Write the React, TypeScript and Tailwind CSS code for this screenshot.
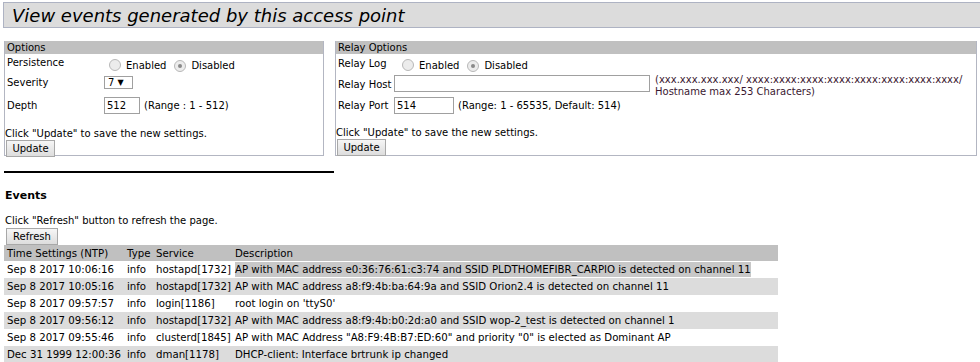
import React from 'react';

const rows = [
  { time: 'Sep 8 2017 10:06:16', type: 'info', service: 'hostapd[1732]', desc: 'AP with MAC address e0:36:76:61:c3:74 and SSID PLDTHOMEFIBR_CARPIO is detected on channel 11', selected: true },
  { time: 'Sep 8 2017 10:05:16', type: 'info', service: 'hostapd[1732]', desc: 'AP with MAC address a8:f9:4b:ba:64:9a and SSID Orion2.4 is detected on channel 11' },
  { time: 'Sep 8 2017 09:57:57', type: 'info', service: 'login[1186]', desc: "root login on 'ttyS0'" },
  { time: 'Sep 8 2017 09:56:12', type: 'info', service: 'hostapd[1732]', desc: 'AP with MAC address a8:f9:4b:b0:2d:a0 and SSID wop-2_test is detected on channel 1' },
  { time: 'Sep 8 2017 09:55:46', type: 'info', service: 'clusterd[1845]', desc: 'AP with MAC Address "A8:F9:4B:B7:ED:60" and priority "0" is elected as Dominant AP' },
  { time: 'Dec 31 1999 12:00:36', type: 'info', service: 'dman[1178]', desc: 'DHCP-client: Interface brtrunk ip changed' },
];

function Radio({ checked }: { checked?: boolean }) {
  return (
    <span className="inline-flex h-[12px] w-[12px] items-center justify-center rounded-full border border-[#b8b8b8] bg-[#ececec]">
      {checked && <span className="h-[4px] w-[4px] rounded-full bg-[#8a8a8a]" />}
    </span>
  );
}

function RadioPair() {
  return (
    <div className="flex items-center">
      <Radio />
      <span className="ml-[5px]">Enabled</span>
      <span className="ml-[8px]"><Radio checked /></span>
      <span className="ml-[5px]">Disabled</span>
    </div>
  );
}

function Btn({ label, w }: { label: string; w: string }) {
  return (
    <div className={`flex h-[17px] ${w} items-center justify-center border border-[#a8a8a8] bg-gradient-to-b from-[#f6f6f6] to-[#dddddd]`}>
      {label}
    </div>
  );
}

export default function App() {
  return (
    <div className="h-[362px] w-[980px] overflow-hidden bg-white text-[10px] leading-[13px] text-black" style={{ fontFamily: '"DejaVu Sans", Verdana, sans-serif' }}>
      <div className="ml-[3px] mt-[2px] flex h-[26px] items-center border border-r-0 border-[#aeb3c3] bg-[#dcdcdc] pl-[8px] text-[18px] italic">
        View events generated by this access point
      </div>

      <div className="ml-[4px] mt-[13px] flex gap-[11px]">
        <div className="h-[115px] w-[320px] border border-t-0 border-[#b3b6c2]">
          <div className="h-[13px] bg-[#c0c0c0] pl-[2px]">Options</div>
          <div className="flex pl-[2px] pt-[2px]">
            <span className="w-[102px]">Persistence</span>
            <span className="pt-[2px]"><RadioPair /></span>
          </div>
          <div className="mt-[4px] flex items-center pl-[2px]">
            <span className="w-[97px]">Severity</span>
            <span className="flex h-[13px] w-[29px] items-center border border-[#a0a0a0] pl-[3px]">
              7 <span className="ml-[3px] text-[8px]">▼</span>
            </span>
          </div>
          <div className="mt-[8px] flex items-center pl-[2px]">
            <span className="w-[97px]">Depth</span>
            <span className="flex h-[17px] w-[36px] items-center border border-[#a0a0a0] pl-[2px]">512</span>
            <span className="ml-[4px]">(Range : 1 - 512)</span>
          </div>
          <div className="mt-[13px]">Click "Update" to save the new settings.</div>
          <div className="ml-[1px]"><Btn label="Update" w="w-[49px]" /></div>
        </div>

        <div className="h-[115px] w-[642px] border border-t-0 border-[#b3b6c2]">
          <div className="h-[13px] bg-[#c0c0c0] pl-[2px]">Relay Options</div>
          <div className="flex pl-[2px] pt-[3px]">
            <span className="w-[64px] whitespace-nowrap">Relay Log</span>
            <span className="pt-[1px]"><RadioPair /></span>
          </div>
          <div className="mt-[3px] flex h-[17px] items-start pl-[2px]">
            <span className="mt-[3px] w-[56px] whitespace-nowrap">Relay Host</span>
            <span className="h-[17px] w-[256px] border border-[#a0a0a0]" />
            <span className="ml-[5px] mt-[-1px] whitespace-nowrap text-[10px] leading-[12px] text-[#3a1830]">
              (xxx.xxx.xxx.xxx/ xxxx:xxxx:xxxx:xxxx:xxxx:xxxx:xxxx:xxxx/<br />
              Hostname max 253 Characters)
            </span>
          </div>
          <div className="mt-[5px] flex items-center pl-[2px]">
            <span className="w-[56px] whitespace-nowrap">Relay Port</span>
            <span className="flex h-[17px] w-[60px] items-center border border-[#a0a0a0] pl-[2px]">514</span>
            <span className="ml-[4px]">(Range: 1 - 65535, Default: 514)</span>
          </div>
          <div className="mt-[12px]">Click "Update" to save the new settings.</div>
          <div className="ml-[1px]"><Btn label="Update" w="w-[49px]" /></div>
        </div>
      </div>

      <div className="ml-[4px] mt-[15px] h-[2px] w-[330px] bg-black" />

      <div className="ml-[5px] mt-[16px] text-[11px] font-bold">Events</div>
      <div className="ml-[5px] mt-[12px]">Click "Refresh" button to refresh the page.</div>
      <div className="ml-[6px] mt-[1px]"><Btn label="Refresh" w="w-[52px]" /></div>

      <table className="ml-[4px] w-[774px] table-fixed border-collapse text-[10.2px]">
        <colgroup>
          <col className="w-[119px]" />
          <col className="w-[29px]" />
          <col className="w-[79px]" />
          <col />
        </colgroup>
        <thead>
          <tr className="h-[16px] bg-[#c0c0c0] text-left">
            <th className="whitespace-nowrap pl-[3px] font-normal">Time Settings (NTP)</th>
            <th className="pl-[4px] font-normal">Type</th>
            <th className="pl-[4px] font-normal">Service</th>
            <th className="pl-[4px] font-normal">Description</th>
          </tr>
        </thead>
        <tbody>
          {rows.map((r, i) => (
            <tr key={i} className={i % 2 === 1 ? 'h-[17px] bg-[#dcdcdc]' : 'h-[17px] bg-white'}>
              <td className="whitespace-nowrap pl-[3px]">{r.time}</td>
              <td className="pl-[4px]">{r.type}</td>
              <td className="whitespace-nowrap pl-[4px]">{r.service}</td>
              <td className="whitespace-nowrap pl-[4px]">
                <span className={r.selected ? 'bg-[#c8c8c8] py-[2px]' : ''}>{r.desc}</span>
              </td>
            </tr>
          ))}
        </tbody>
      </table>
    </div>
  );
}
